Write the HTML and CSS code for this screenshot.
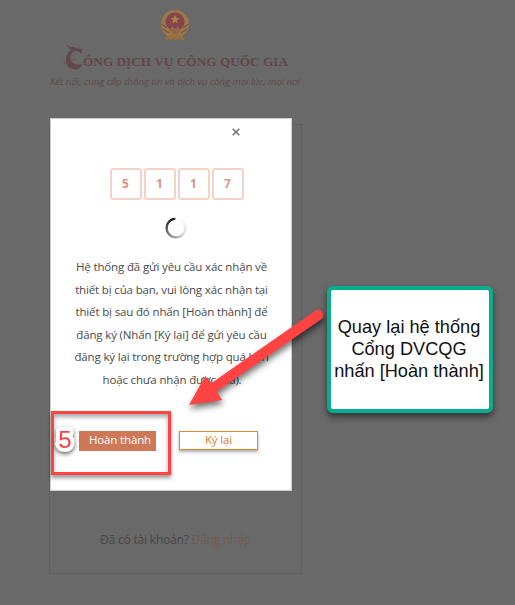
FILE: index.html
```html
<!DOCTYPE html>
<html lang="vi">
<head>
<meta charset="utf-8">
<title>Cổng Dịch vụ công Quốc gia</title>
<link rel="stylesheet" href="styles.css">
</head>
<body>
<header class="brand">
  <svg class="emblem" viewBox="0 0 30 32" width="30" height="32">
    <path d="M8 22L22 22L24 31L19 30L15 31L11 30L6 31Z" fill="#9a6c40"/>
    <circle cx="15" cy="15" r="14" fill="#997a45"/>
    <path d="M6 16A9.500 9.500 0 1 1 24 16L20 21H10Z" fill="#854450"/>
    <path d="M1.500 15L7 19M28.500 15L23 19M3 20L9 24M27 20L21 24" fill="none" stroke="#85504a" stroke-width="1.2"/>
    <path d="M15 5.500L16.200 8.800L19.500 9L17 11.200L17.800 14.600L15 12.800L12.200 14.600L13 11.200L10.500 9L13.800 8.800Z" fill="#a88543"/>
    <path d="M9 21L12 17.500L15 19.500L18 17.500L21 21L17 25H13Z" fill="#94654a"/>
    <path d="M7 27Q15 24 23 27L23.500 30L15 29L6.500 30Z" fill="#9a6c40"/>
  </svg>
  <div class="name">
    <svg class="bird" viewBox="0 0 24 28" width="24" height="28">
      <path d="M1 20Q4 15 9 18Q7 22 1 20M9 17Q13 13 16 16Q14 20 9 18" fill="#7a5d50"/>
      <path d="M4.500 1L9 4.200Q13 3 16 5.500L21 5.500L20.500 11Q17 6.500 13 8Q8.500 11 9.500 17Q12 23 21 21Q20 27 13 26.500Q4 25 5 16Q5.500 10 10 7Q7 4 4.500 1Z" fill="#60484c"/>
    </svg>
    <span class="wordmark">ỔNG DỊCH VỤ CÔNG QUỐC GIA</span>
  </div>
  <p class="slogan">Kết nối, cung cấp thông tin và dịch vụ công mọi lúc, mọi nơi</p>
</header>
<main class="panel">
  <p class="account">Đã có tài khoản? <a>Đăng nhập</a></p>
</main>

<section class="modal">
  <svg class="close" viewBox="0 0 8 8" width="8" height="8"><path d="M.7.7L7.3 7.3M7.3.7L.7 7.3" stroke="#777" stroke-width="1.6"/></svg>
  <div class="code"><b>5</b><b>1</b><b>1</b><b>7</b></div>
  <div class="spinner"></div>
  <div class="message">
    <span>Hệ thống đã gửi yêu cầu xác nhận về</span>
    <span>thiết bị của bạn, vui lòng xác nhận tại</span>
    <span>thiết bị sau đó nhấn [Hoàn thành] để</span>
    <span>đăng ký (Nhấn [Ký lại] để gửi yêu cầu</span>
    <span>đăng ký lại trong trường hợp quá hạn</span>
    <span>hoặc chưa nhận được mã).</span>
  </div>
  <div class="actions">
    <span class="btn primary">Hoàn thành</span>
    <span class="btn outline">Ký lại</span>
  </div>
</section>

<div class="highlight"></div>
<svg class="step" viewBox="0 0 30 34" width="30" height="34">
  <text x="15" y="26" text-anchor="middle">5</text>
</svg>
<svg class="arrow" viewBox="0 0 160 120" width="160" height="120">
  <path d="M135.300 10.700A5.200 5.200 0 0 1 141.500 19L36.500 91.500L42 100L9 105L25.200 76L31.500 83Z" fill="#ff4343"/>
</svg>
<aside class="callout"><span>Quay lại hệ thống</span><span>Cổng DVCQG</span><span>nhấn [Hoàn thành]</span></aside>
</body>
</html>
```
FILE: styles.css
```css
* { box-sizing: border-box; }
body {
  margin: 0;
  width: 515px;
  height: 605px;
  overflow: hidden;
  position: relative;
  background: #696969;
  font-family: "Open Sans", "Noto Sans", sans-serif;
}
.brand {
  height: 124px;
  width: 252px;
  margin-left: 49px;
  padding-top: 9px;
  display: flex;
  flex-direction: column;
  align-items: center;
}
.emblem { display: block; flex: none; }
.name {
  display: flex;
  align-items: flex-start;
  align-self: flex-start;
  margin-left: 12px;
  height: 33px;
}
.bird { margin-top: 2px; flex: none; }
.wordmark {
  font: bold 13.2px/18px "Liberation Serif", serif;
  color: #5f484c;
  white-space: nowrap;
  margin: 12px 0 0 -2px;
  letter-spacing: .05px;
}
.slogan {
  margin: 0;
  font-size: 9.5px;
  line-height: 16px;
  font-style: italic;
  color: #5b4b4d;
  white-space: nowrap;
  letter-spacing: .02px;
}
.panel {
  width: 253px;
  height: 450px;
  margin-left: 49px;
  border: 1px solid #616161;
  display: flex;
  align-items: flex-end;
  justify-content: center;
}
.account {
  margin: 0 0 24px;
  font-size: 12px;
  letter-spacing: -.2px;
  line-height: 18px;
  color: #484848;
  white-space: nowrap;
}
.account a { color: #745b52; }
.modal {
  position: absolute;
  left: 50px;
  top: 118px;
  width: 242px;
  height: 373px;
  background: #fff;
  border: 1px solid #ccc;
  display: flex;
  flex-direction: column;
  align-items: center;
}
.close { margin: 9px 0 0 129px; flex: none; }
.code { display: flex; gap: 2px; margin: 32px 0 0 11px; }
.code b {
  width: 32px;
  height: 32px;
  border: 2px solid #f3d3c8;
  border-radius: 3px;
  font-size: 12px;
  line-height: 28px;
  text-align: center;
  color: #dc967c;
}
.spinner {
  width: 22px;
  height: 22px;
  margin: 17px 0 0 10px;
  border-radius: 50%;
  background: conic-gradient(#fff 0, #f4f4f4 15%, #ddd 35%, #aaa 50%, #666 72%, #111 97%, #fff 100%);
  -webkit-mask: radial-gradient(circle, transparent 7.8px, #000 8.5px, #000 10.2px, transparent 11px);
  mask: radial-gradient(circle, transparent 7.8px, #000 8.5px, #000 10.2px, transparent 11px);
}
.message {
  margin: 17px 0 0 1px;
  display: flex;
  flex-direction: column;
  align-items: center;
  font-size: 11.5px;
  letter-spacing: -.15px;
  line-height: 22.5px;
  color: #4a4a4a;
  white-space: nowrap;
}
.message span:last-child { margin-right: -1px; }
.actions { display: flex; gap: 23px; margin: 40px 0 0 -5px; }
.btn {
  font-size: 11.5px;
  letter-spacing: -.15px;
  line-height: 17px;
  height: 20px;
  text-align: center;
  white-space: nowrap;
}
.primary { width: 77px; background: #cf7858; color: #fff; padding-left: 5px; }
.outline {
  width: 79px;
  height: 19px;
  line-height: 16px;
  border: 1px solid #e6862b;
  color: #e17d2d;
  box-shadow: 0 2px 3px #aaa;
}
.highlight {
  position: absolute;
  left: 51px;
  top: 411px;
  width: 120px;
  height: 64px;
  border: 3px solid #ff4343;
  box-shadow: 0 3px 4px rgba(0, 0, 0, .4), inset 0 3px 4px rgba(0, 0, 0, .35);
}
.step {
  position: absolute;
  left: 50px;
  top: 422px;
  filter: drop-shadow(0 2px 2px rgba(0, 0, 0, .6));
}
.step text {
  font: 24px "Liberation Sans", sans-serif;
  fill: #ff3f45;
  stroke: #fff;
  stroke-width: 8px;
  stroke-linejoin: round;
  paint-order: stroke;
}
.arrow {
  position: absolute;
  left: 180px;
  top: 300px;
  overflow: visible;
  filter: drop-shadow(1px 4px 3px rgba(0, 0, 0, .55));
}
.callout {
  position: absolute;
  left: 327px;
  top: 286px;
  width: 166px;
  height: 127px;
  border: 4px solid #09ad8e;
  border-radius: 6px;
  background: #fff;
  box-shadow: 0 4px 6px rgba(0, 0, 0, .5);
  display: flex;
  flex-direction: column;
  justify-content: center;
  align-items: center;
  font: 18.2px/22px "Liberation Sans", sans-serif;
  color: #111;
  white-space: nowrap;
  padding: 0 2px 1px 0;
}
```
